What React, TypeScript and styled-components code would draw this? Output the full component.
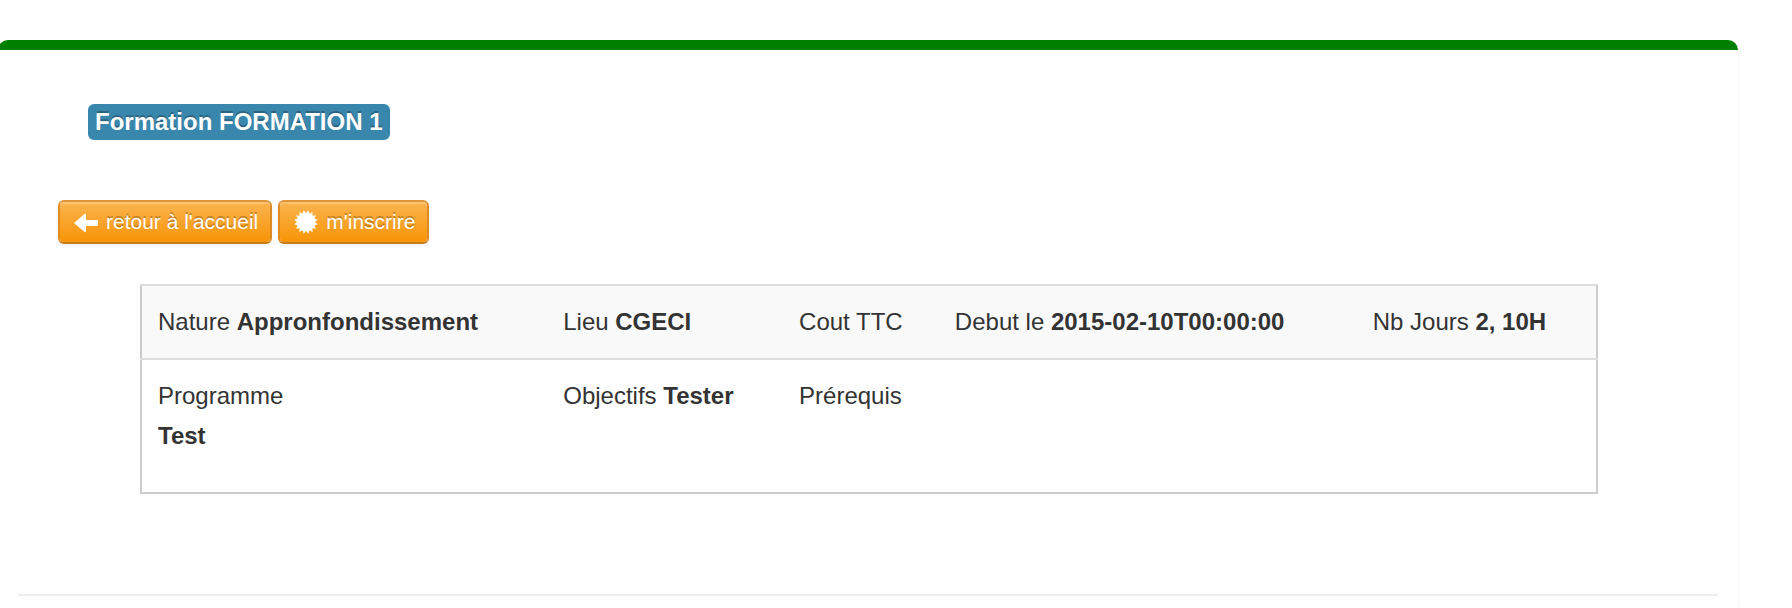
import React from "react";
import styled, { createGlobalStyle, css } from "styled-components";

const GlobalStyle = createGlobalStyle`
  *, *::before, *::after { box-sizing: border-box; }
  body {
    margin: 0;
    background: #fff;
    color: #333;
    font: 24px/40px "Liberation Sans", Helvetica, Arial, sans-serif;
  }
`;

const Page = styled.div`
  display: flex;
  flex-direction: column;
  min-height: 100vh;
  padding: 40px 54px 0 0;
  overflow: hidden;
`;

const Card = styled.main`
  flex: 1;
  margin-left: -2px;
  padding: 54px 20px 10px;
  border-top: 10px solid #008000;
  border-radius: 10px 10px 0 0;
  background: #fefefe;
  box-shadow: 0 2px 4px rgba(0, 0, 0, 0.05);
`;

const Heading = styled.h3`
  display: flex;
  margin: 0 0 60px 70px;
  font-size: 24px;
`;

const Label = styled.span`
  padding: 4px 7px;
  border-radius: 6px;
  background: #3a87ad;
  color: #fff;
  line-height: 28px;
  text-shadow: 0 -2px 0 rgba(0, 0, 0, 0.25);
`;

const Actions = styled.div`
  display: flex;
  gap: 6px;
  margin: 0 0 40px 40px;
`;

const buttonStyle = css`
  display: flex;
  align-items: center;
  gap: 6px;
  height: 44px;
  padding: 0 12px;
  border: 2px solid;
  border-color: #e09435 #dc8c22 #c67c1a;
  border-radius: 6px;
  background: linear-gradient(#fbb450, #f89406) padding-box;
  box-shadow: inset 0 2px 0 rgba(255, 255, 255, 0.2), 0 2px 4px rgba(0, 0, 0, 0.05);
  color: #fff;
  font: 21px/36px "Liberation Sans", Helvetica, Arial, sans-serif;
  text-decoration: none;
  text-shadow: 0 -2px 0 rgba(0, 0, 0, 0.25);
  white-space: nowrap;
  cursor: pointer;
`;

const LinkButton = styled.a`
  ${buttonStyle}
`;

const ActionButton = styled.button`
  ${buttonStyle}
`;

const Icon = styled.svg`
  width: 28px;
  height: 28px;
  fill: #fff;
`;

const TableArea = styled.div`
  margin: 0 120px 100px 122px;
`;

const Table = styled.table`
  width: 100%;
  table-layout: fixed;
  border: 2px solid #ccc;
  border-collapse: collapse;
`;

const Column = styled.col<{ $share?: number }>`
  width: ${({ $share }) => ($share ? `${$share}%` : "auto")};
`;

const Row = styled.tr<{ $striped?: boolean }>`
  background: ${({ $striped }) => ($striped ? "#f9f9f9" : "transparent")};
`;

const Cell = styled.td`
  padding: 16px;
  border-top: 2px solid #ddd;
  text-align: left;
  vertical-align: top;
`;

const Paragraph = styled.p`
  margin: 0 0 20px;
`;

const Divider = styled.hr`
  height: 2px;
  margin: 0;
  border: 0;
  background: #eee;
`;

const BADGE_POINTS = Array.from({ length: 32 }, (_, i) => {
  const radius = i % 2 === 0 ? 9 : 12;
  const angle = (i * Math.PI) / 16;
  return `${(14 + radius * Math.sin(angle)).toFixed(2)},${(14 - radius * Math.cos(angle)).toFixed(2)}`;
}).join(" ");

const ArrowLeft = () => (
  <Icon viewBox="0 0 28 28" aria-hidden="true">
    <path d="M2 15 L12 6.500 Q14 5 14 7 V12 H25 Q26 12 26 13 V17 Q26 18 25 18 H14 V23 Q14 25 12 23.500 Z" />
  </Icon>
);

const Badge = () => (
  <Icon viewBox="0 0 28 28" aria-hidden="true">
    <polygon points={BADGE_POINTS} />
  </Icon>
);

export default function App() {
  return (
    <Page>
      <GlobalStyle />
      <Card>
        <Heading>
          <Label>Formation FORMATION 1</Label>
        </Heading>
        <Actions>
          <LinkButton href="#accueil">
            <ArrowLeft />
            retour à l'accueil
          </LinkButton>
          <ActionButton type="button">
            <Badge />
            m'inscrire
          </ActionButton>
        </Actions>
        <TableArea>
          <Table>
            <colgroup>
              <Column $share={27.9} />
              <Column $share={16.2} />
              <Column $share={10.7} />
              <Column $share={28.7} />
              <Column />
            </colgroup>
            <tbody>
              <Row $striped>
                <Cell>Nature <strong>Appronfondissement</strong></Cell>
                <Cell>Lieu <strong>CGECI</strong></Cell>
                <Cell>Cout TTC</Cell>
                <Cell>Debut le <strong>2015-02-10T00:00:00</strong></Cell>
                <Cell>Nb Jours <strong>2, 10H</strong></Cell>
              </Row>
              <Row>
                <Cell>
                  Programme
                  <Paragraph><strong>Test</strong></Paragraph>
                </Cell>
                <Cell>Objectifs <strong>Tester</strong></Cell>
                <Cell>Prérequis</Cell>
                <Cell />
                <Cell />
              </Row>
            </tbody>
          </Table>
        </TableArea>
        <Divider />
      </Card>
    </Page>
  );
}
